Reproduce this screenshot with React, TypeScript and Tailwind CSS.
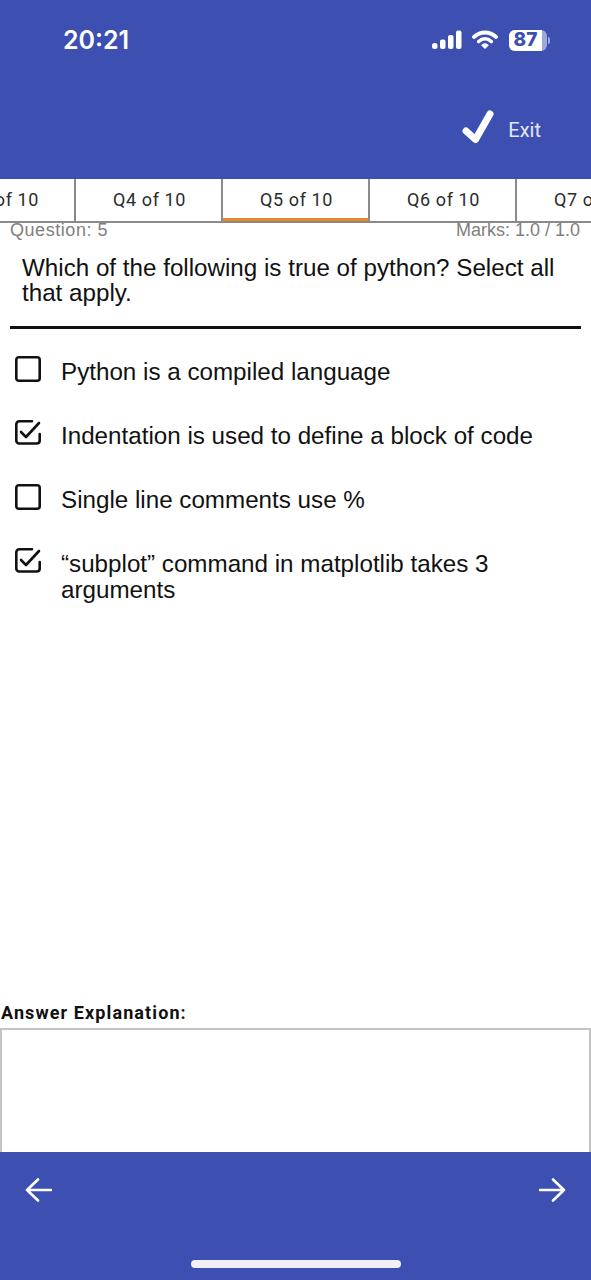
const TABS = [
  { label: 'Q3 of 10', active: false },
  { label: 'Q4 of 10', active: false },
  { label: 'Q5 of 10', active: true },
  { label: 'Q6 of 10', active: false },
  { label: 'Q7 of 10', active: false },
];

const OPTIONS = [
  { text: 'Python is a compiled language', checked: false },
  { text: 'Indentation is used to define a block of code', checked: true },
  { text: 'Single line comments use %', checked: false },
  { text: '“subplot” command in matplotlib takes 3 arguments', checked: true },
];

function StatusIcons() {
  return (
    <div className="flex items-center gap-[10px]">
      <svg width="30" height="20" viewBox="0 0 30 20" fill="white">
        <rect x="0" y="13" width="5.5" height="6" rx="2.5" />
        <rect x="8" y="9.5" width="5.5" height="9.5" rx="2" />
        <rect x="16" y="5" width="5.5" height="14" rx="2" />
        <rect x="24" y="0.5" width="5.5" height="18.5" rx="2" />
      </svg>
      <svg width="26" height="20" viewBox="0 0 26 20" fill="none" stroke="white" strokeLinecap="round">
        <path d="M2 7C8.500 1 17.500 1 24 7" strokeWidth="3.800" />
        <path d="M6.700 11.500C10.500 8 15.500 8 19.300 11.500" strokeWidth="3.600" />
        <path d="M13 18L10.200 15.200C11.800 13.800 14.200 13.800 15.800 15.200Z" fill="white" strokeWidth="1.500" />
      </svg>
      <div className="ml-px flex items-center">
        <div className="h-[21px] w-[38px] rounded-[6px] bg-white/50">
          <div className="flex h-full w-[33px] items-center justify-center rounded-l-[6px] bg-white font-['Inter',sans-serif] text-[19px] font-extrabold text-[#3d4fb0]">
            87
          </div>
        </div>
        <div className="ml-px h-[7px] w-[2px] rounded-r-sm bg-white/50" />
      </div>
    </div>
  );
}

function OptionBox({ checked }: { checked: boolean }) {
  return (
    <svg width="26" height="26" viewBox="0 0 26 26" fill="none" className="shrink-0">
      {checked ? (
        <>
          <path
            d="M24.700 14V20.500C24.700 22.300 23.400 23.500 21.700 23.500H4.300C2.600 23.500 1.300 22.300 1.300 20.500V4.300C1.300 2.500 2.600 1.300 4.300 1.300H17"
            stroke="#111"
            strokeWidth="2.600"
            strokeLinecap="round"
          />
          <path d="M6 12L11 17L24 3" stroke="#111" strokeWidth="2.600" strokeLinecap="round" strokeLinejoin="round" />
        </>
      ) : (
        <rect x="1.300" y="1.300" width="23.400" height="23.400" rx="2.500" stroke="#111" strokeWidth="2.600" />
      )}
    </svg>
  );
}

export default function App() {
  return (
    <div className="flex h-[1280px] w-[591px] flex-col overflow-hidden bg-white font-['Liberation_Sans',Arial,sans-serif]">
      {/* Header */}
      <div className="h-[179px] shrink-0 bg-[#3d4fb0] text-white">
        <div className="flex items-center justify-between pl-[63px] pr-[41px] pt-[25px]">
          <span className="font-['Inter',sans-serif] text-[25px] leading-[30px] font-semibold">20:21</span>
          <StatusIcons />
        </div>
        <div className="mt-[55px] flex items-center justify-end gap-[14px] pr-[50px]">
          <svg width="32" height="34" viewBox="0 0 32 34" fill="none">
            <path d="M4 21L13.500 29.500L28 4" stroke="white" strokeWidth="7" strokeLinecap="round" strokeLinejoin="round" />
          </svg>
          <span className="mt-[5px] font-['Roboto',sans-serif] text-[20px] leading-6 text-[#e4e7f5]">Exit</span>
        </div>
      </div>

      {/* Tabs */}
      <div className="h-[44px] shrink-0 overflow-hidden border-b-2 border-[#8a8a8a] bg-white">
        <div className="-ml-[71px] flex h-full w-[800px] font-['Roboto',sans-serif] text-[18px] tracking-[0.6px] text-[#2b2b2b]">
          {TABS.map((tab) => (
            <div
              key={tab.label}
              className={`flex h-full w-[147px] shrink-0 items-center justify-center border-r-2 border-[#8a8a8a] pb-[2px] pl-[2px] ${
                tab.active ? 'relative' : ''
              }`}
            >
              {tab.label}
              {tab.active && <div className="absolute right-0 bottom-0 left-0 h-[3px] bg-[#e98a2a]" />}
            </div>
          ))}
        </div>
      </div>

      {/* Question */}
      <div className="flex justify-between pl-[10px] pr-[11px] text-[18px] leading-[14px] text-[#808080]">
        <span className="tracking-[0.55px]">Question: 5</span>
        <span>Marks: 1.0 / 1.0</span>
      </div>
      <div className="mx-[10px] mt-[18px] border-b-[3px] border-[#111] pb-[21px] pl-3 text-[24.2px] leading-[25px] text-[#111]">
        Which of the following is true of python? Select all that apply.
      </div>

      {/* Options */}
      <div className="mt-[27px] flex flex-col gap-[35px] pl-[15px] pr-[50px]">
        {OPTIONS.map((opt) => (
          <div key={opt.text} className="flex items-start gap-[20px]">
            <OptionBox checked={opt.checked} />
            <span className="pt-[3px] text-[24.2px] leading-[26px] text-[#111]">{opt.text}</span>
          </div>
        ))}
      </div>

      {/* Explanation */}
      <div className="mt-auto">
        <div className="pl-[1px] font-['Roboto',sans-serif] text-[18px] leading-[22px] font-bold tracking-[1.1px] text-[#111]">
          Answer Explanation:
        </div>
        <div className="mt-[4px] h-[124px] border-x-2 border-t-2 border-[#c4c4c4] bg-white" />
      </div>

      {/* Footer */}
      <div className="relative h-[128px] shrink-0 bg-[#3d4fb0] text-white">
        <div className="flex items-center justify-between pl-[25px] pr-[25px] pt-[26px]">
          <svg width="27" height="24" viewBox="0 0 27 24" fill="none" stroke="white" strokeWidth="2.600" strokeLinecap="round" strokeLinejoin="round">
            <path d="M26 12H2M13 1.500L2 12L13 22.500" />
          </svg>
          <svg width="27" height="24" viewBox="0 0 27 24" fill="none" stroke="white" strokeWidth="2.600" strokeLinecap="round" strokeLinejoin="round">
            <path d="M1 12H25M14 1.500L25 12L14 22.500" />
          </svg>
        </div>
        <div className="absolute bottom-[12px] left-[191px] h-[8px] w-[210px] rounded-full bg-[#f0eff4]" />
      </div>
    </div>
  );
}
